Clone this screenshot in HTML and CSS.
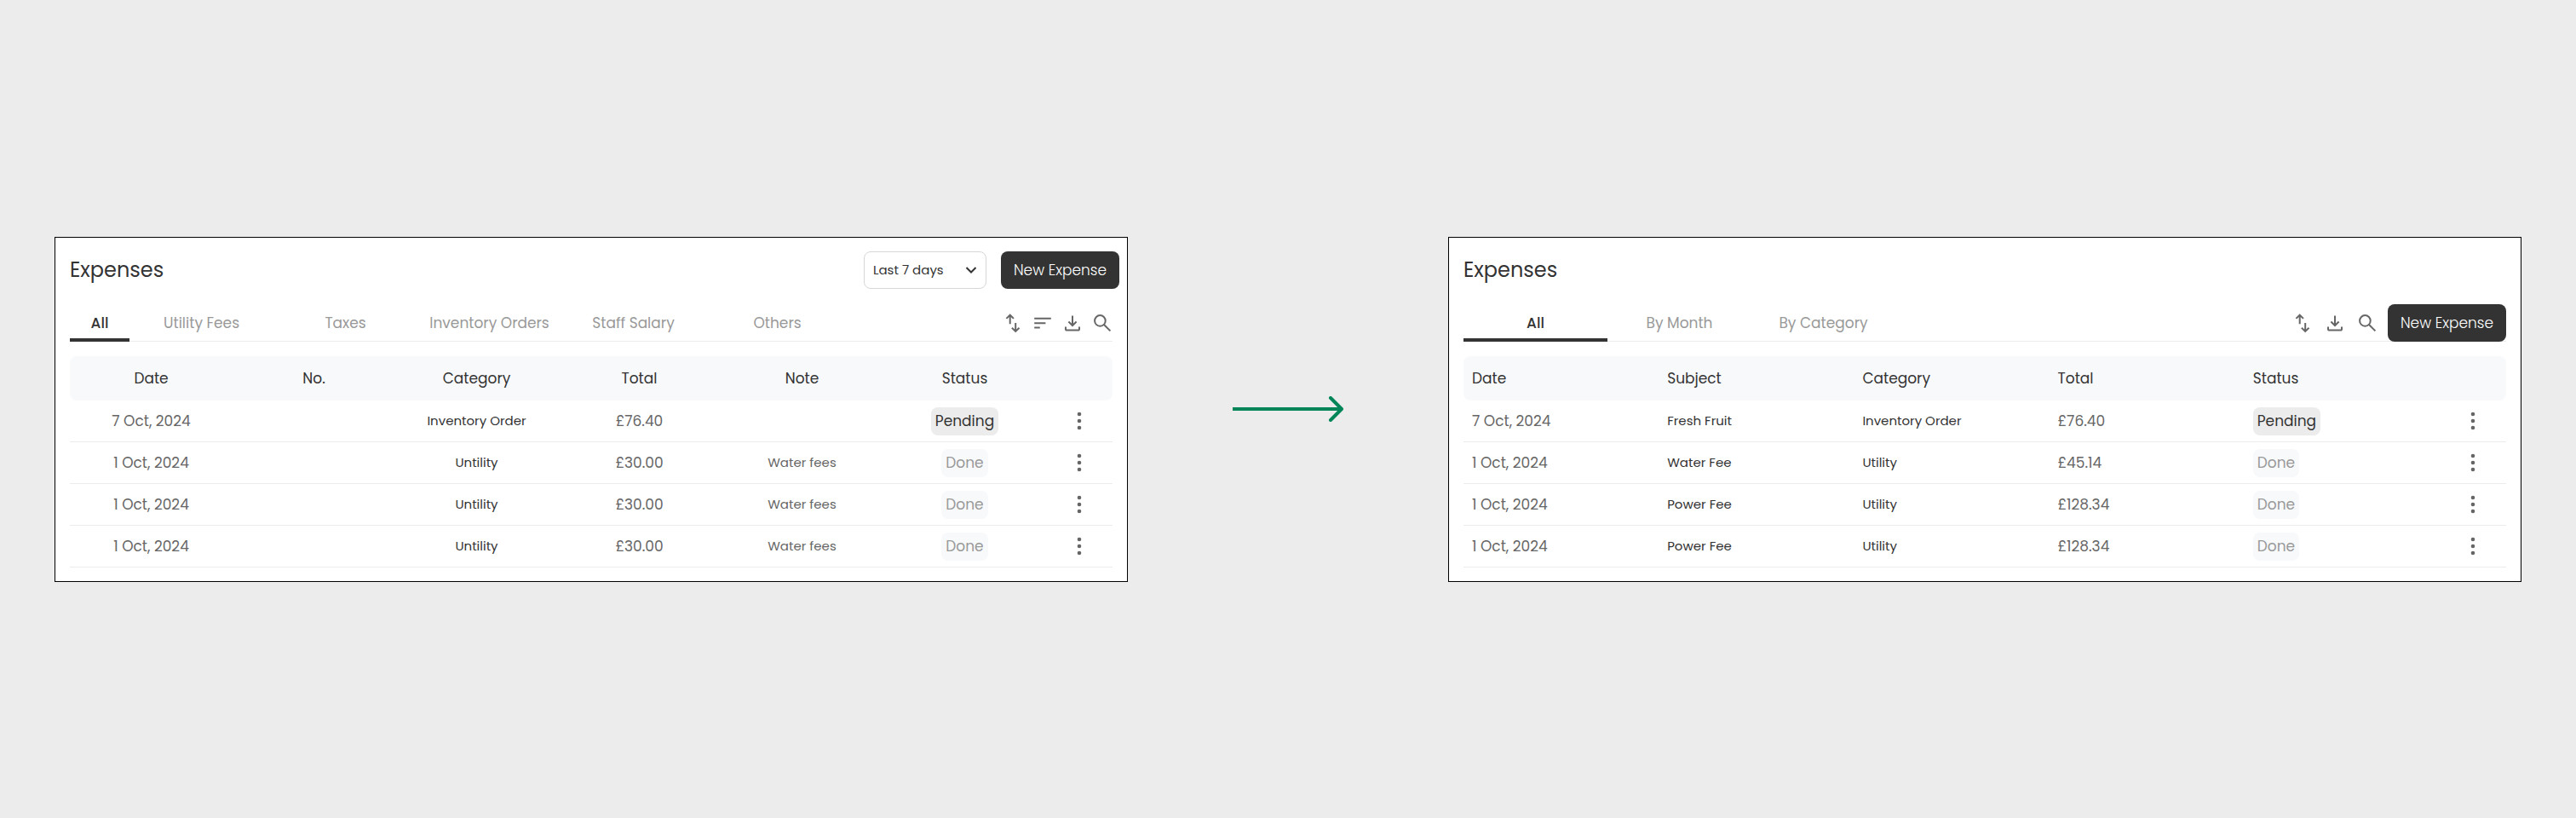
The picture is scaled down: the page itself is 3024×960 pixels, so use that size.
FILE: index.html
```html
<!DOCTYPE html>
<html lang="en">
<head>
<meta charset="utf-8">
<meta name="viewport" content="width=device-width, initial-scale=1">
<title>Expenses</title>
<link rel="stylesheet" href="styles.css">
</head>
<body>
<svg class="sprite" aria-hidden="true">
  <symbol id="icon-sort" viewBox="0 0 24 24"><path d="M8.7 13.2V3.2M4.4 6.9l4.3-4.2L13 6.9M15.2 12v10M10.9 17.7l4.3 4.2 4.3-4.2"/></symbol>
  <symbol id="icon-filter" viewBox="0 0 24 24"><path d="M2.2 6.8h19.6M2.2 12.2h13.2M2.2 17.6h6.6"/></symbol>
  <symbol id="icon-download" viewBox="0 0 24 24"><path d="M12 3.6v11.2M7.4 10.5l4.6 4.5 4.6-4.5M4 16.4V19a1.6 1.6 0 0 0 1.6 1.6h12.8A1.6 1.6 0 0 0 20 19v-2.6"/></symbol>
  <symbol id="icon-search" viewBox="0 0 24 24"><circle cx="9.4" cy="9.4" r="6.3"/><path d="M14 14l7.4 7.4"/></symbol>
  <symbol id="icon-more" viewBox="0 0 24 24"><g class="dots"><circle cx="12" cy="4" r="2.3"/><circle cx="12" cy="12" r="2.3"/><circle cx="12" cy="20" r="2.3"/></g></symbol>
</svg>
<main class="comparison">
  <section class="panel" aria-labelledby="title-before">
    <header class="panel-head panel-head-wide">
      <h2 class="title" id="title-before">Expenses</h2>
      <div class="head-actions">
        <div class="select-box">
          <select class="select" aria-label="Period"><option>Last 7 days</option><option>Last 30 days</option></select>
          <svg class="chevron" viewBox="0 0 14 10" aria-hidden="true"><path d="M1.5 2L7 7.5 12.5 2"/></svg>
        </div>
        <button class="primary" type="button">New Expense</button>
      </div>
    </header>
    <div class="toolbar">
      <nav class="tabs" aria-label="Expense categories">
        <a class="tab tab-narrow tab-active" href="#all" aria-current="page">All</a>
        <a class="tab" href="#utility">Utility Fees</a>
        <a class="tab" href="#taxes">Taxes</a>
        <a class="tab" href="#inventory">Inventory Orders</a>
        <a class="tab" href="#salary">Staff Salary</a>
        <a class="tab" href="#others">Others</a>
      </nav>
      <div class="tools">
        <button class="icon-button" type="button" aria-label="Sort"><svg class="icon"><use href="#icon-sort"/></svg></button>
        <button class="icon-button" type="button" aria-label="Filter"><svg class="icon"><use href="#icon-filter"/></svg></button>
        <button class="icon-button" type="button" aria-label="Download"><svg class="icon"><use href="#icon-download"/></svg></button>
        <button class="icon-button" type="button" aria-label="Search"><svg class="icon"><use href="#icon-search"/></svg></button>
      </div>
    </div>
    <table class="table table-centered">
      <thead>
        <tr><th>Date</th><th>No.</th><th>Category</th><th>Total</th><th>Note</th><th>Status</th><th class="menu-cell" aria-label="Actions"></th></tr>
      </thead>
      <tbody>
        <tr><td>7 Oct, 2024</td><td></td><td class="label">Inventory Order</td><td>£76.40</td><td class="note"></td><td><span class="badge badge-pending">Pending</span></td><td class="menu-cell"><button class="icon-button" type="button" aria-label="More"><svg class="icon"><use href="#icon-more"/></svg></button></td></tr>
        <tr><td>1 Oct, 2024</td><td></td><td class="label">Untility</td><td>£30.00</td><td class="note">Water fees</td><td><span class="badge">Done</span></td><td class="menu-cell"><button class="icon-button" type="button" aria-label="More"><svg class="icon"><use href="#icon-more"/></svg></button></td></tr>
        <tr><td>1 Oct, 2024</td><td></td><td class="label">Untility</td><td>£30.00</td><td class="note">Water fees</td><td><span class="badge">Done</span></td><td class="menu-cell"><button class="icon-button" type="button" aria-label="More"><svg class="icon"><use href="#icon-more"/></svg></button></td></tr>
        <tr><td>1 Oct, 2024</td><td></td><td class="label">Untility</td><td>£30.00</td><td class="note">Water fees</td><td><span class="badge">Done</span></td><td class="menu-cell"><button class="icon-button" type="button" aria-label="More"><svg class="icon"><use href="#icon-more"/></svg></button></td></tr>
      </tbody>
    </table>
  </section>

  <svg class="arrow" viewBox="0 0 130 30" aria-hidden="true"><path d="M0 15h127"/><path class="arrow-tip" d="M115 2l13 13-13 13"/></svg>

  <section class="panel" aria-labelledby="title-after">
    <header class="panel-head">
      <h2 class="title" id="title-after">Expenses</h2>
    </header>
    <div class="toolbar">
      <nav class="tabs" aria-label="Expense views">
        <a class="tab tab-active" href="#all-expenses" aria-current="page">All</a>
        <a class="tab" href="#by-month">By Month</a>
        <a class="tab" href="#by-category">By Category</a>
      </nav>
      <div class="toolbar-actions">
        <div class="tools tools-spaced">
          <button class="icon-button" type="button" aria-label="Sort"><svg class="icon"><use href="#icon-sort"/></svg></button>
          <button class="icon-button" type="button" aria-label="Download"><svg class="icon"><use href="#icon-download"/></svg></button>
          <button class="icon-button" type="button" aria-label="Search"><svg class="icon"><use href="#icon-search"/></svg></button>
        </div>
        <button class="primary" type="button">New Expense</button>
      </div>
    </div>
    <table class="table">
      <thead>
        <tr><th>Date</th><th>Subject</th><th>Category</th><th>Total</th><th>Status</th><th class="menu-cell" aria-label="Actions"></th></tr>
      </thead>
      <tbody>
        <tr><td>7 Oct, 2024</td><td class="label">Fresh Fruit</td><td class="label">Inventory Order</td><td>£76.40</td><td><span class="badge badge-pending">Pending</span></td><td class="menu-cell"><button class="icon-button" type="button" aria-label="More"><svg class="icon"><use href="#icon-more"/></svg></button></td></tr>
        <tr><td>1 Oct, 2024</td><td class="label">Water Fee</td><td class="label">Utility</td><td>£45.14</td><td><span class="badge">Done</span></td><td class="menu-cell"><button class="icon-button" type="button" aria-label="More"><svg class="icon"><use href="#icon-more"/></svg></button></td></tr>
        <tr><td>1 Oct, 2024</td><td class="label">Power Fee</td><td class="label">Utility</td><td>£128.34</td><td><span class="badge">Done</span></td><td class="menu-cell"><button class="icon-button" type="button" aria-label="More"><svg class="icon"><use href="#icon-more"/></svg></button></td></tr>
        <tr><td>1 Oct, 2024</td><td class="label">Power Fee</td><td class="label">Utility</td><td>£128.34</td><td><span class="badge">Done</span></td><td class="menu-cell"><button class="icon-button" type="button" aria-label="More"><svg class="icon"><use href="#icon-more"/></svg></button></td></tr>
      </tbody>
    </table>
  </section>
</main>
</body>
</html>
```

FILE: styles.css
```css
* {
  box-sizing: border-box;
}

body {
  margin: 0;
  background: #ececec;
  color: #333;
  font-family: Poppins, Inter, sans-serif;
  font-size: 17px;
  line-height: 24px;
}

button,
select {
  font-family: inherit;
}

.sprite {
  display: none;
}

.comparison {
  display: grid;
  grid-template-columns: minmax(0, 1fr) 376px minmax(0, 1fr);
  align-items: center;
  min-height: 100vh;
  padding: 0 64px;
}

.panel {
  padding: 16px 17px;
  border: 1px solid #000;
  background: #fff;
}

.panel-head {
  display: flex;
  align-items: center;
  justify-content: space-between;
  min-height: 44px;
}

.panel-head-wide {
  margin-right: -8px;
}

.title {
  margin: 0;
  font-size: 24px;
  font-weight: 400;
  line-height: 32px;
}

.head-actions {
  display: flex;
  gap: 17px;
}

.select-box {
  position: relative;
}

.select {
  width: 144px;
  height: 44px;
  padding: 0 10px;
  border: 1px solid #d6d6d6;
  border-radius: 8px;
  appearance: none;
  background: #fff;
  color: #333;
  font-size: 15px;
}

.chevron {
  position: absolute;
  top: 17px;
  right: 11px;
  width: 14px;
  height: 10px;
  fill: none;
  stroke: #333;
  stroke-width: 2;
  pointer-events: none;
}

.primary {
  width: 139px;
  height: 44px;
  padding: 0;
  border: 0;
  border-radius: 8px;
  background: #333;
  color: #fff;
  font-size: 17px;
  font-weight: 300;
}

.toolbar {
  display: flex;
  justify-content: space-between;
  margin: 18px 0 17px;
  box-shadow: inset 0 -1px #ececec;
}

.tabs {
  display: flex;
}

.tab {
  width: 169px;
  height: 44px;
  padding: 10px 0 6px;
  border-bottom: 4px solid transparent;
  color: #999;
  text-align: center;
  text-decoration: none;
}

.tab-narrow {
  width: 70px;
}

.tab-active {
  border-color: #333;
  color: #333;
  font-weight: 500;
}

.toolbar-actions {
  display: flex;
  gap: 12px;
}

.tools {
  display: flex;
  align-items: center;
  gap: 11px;
}

.tools-spaced {
  gap: 14px;
}

.icon-button {
  display: block;
  width: 24px;
  height: 24px;
  padding: 0;
  border: 0;
  background: none;
}

.icon {
  display: block;
  width: 24px;
  height: 24px;
  fill: none;
  stroke: #666;
  stroke-width: 2;
}

.dots {
  fill: #666;
  stroke: none;
}

.table {
  width: 100%;
  border-spacing: 0;
  table-layout: fixed;
  text-align: left;
}

.table-centered {
  text-align: center;
}

th,
td {
  padding: 1px 0 0 10px;
}

.table-centered th,
.table-centered td {
  padding: 1px 0 0;
}

th {
  height: 52px;
  background: #f8f9fb;
  font-weight: 400;
}

th:first-child {
  border-radius: 8px 0 0 8px;
}

th:last-child {
  border-radius: 0 8px 8px 0;
}

td {
  height: 49px;
  border-bottom: 1px solid #ececec;
  color: #666;
}

.label {
  color: #333;
  font-size: 15px;
}

.note {
  font-size: 15px;
}

.table .menu-cell {
  width: 78px;
  padding: 0 27px;
}

.badge {
  display: inline-block;
  padding: 4px 5px 5px;
  border-radius: 8px;
  background: #f8f9fb;
  color: #999;
}

.badge-pending {
  background: #ececec;
  color: #333;
}

.arrow {
  justify-self: center;
  width: 130px;
  height: 30px;
  fill: none;
  stroke: #008558;
  stroke-width: 4;
}

.arrow-tip {
  stroke-linecap: round;
  stroke-linejoin: round;
}
```
